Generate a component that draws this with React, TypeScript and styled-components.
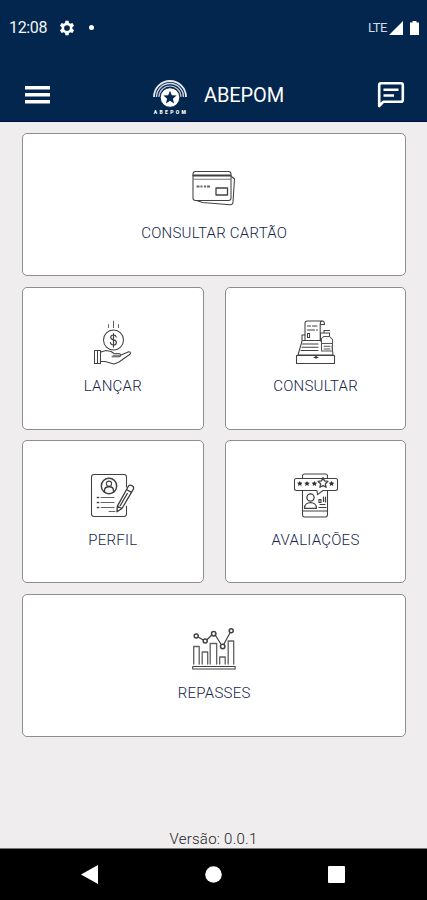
import React from 'react';
import styled, { createGlobalStyle } from 'styled-components';

const GlobalStyle = createGlobalStyle`
  * { box-sizing: border-box; }
  body { margin: 0; background: #efedee; font-family: Roboto, "Liberation Sans", sans-serif; }
  svg { display: block; flex: none; }
`;

const Screen = styled.div`
  width: 427px;
  height: 900px;
  display: flex;
  flex-direction: column;
  background: #efedee;
  overflow: hidden;
`;

const Header = styled.header`
  height: 122px;
  flex: none;
  background: #03264e;
  border-bottom: 1px solid #050741;
  color: #fff;
`;

const StatusBar = styled.div`
  height: 55px;
  padding: 0 7px 0 9px;
  display: flex;
  align-items: center;
  justify-content: space-between;
`;

const StatusGroup = styled.div<{ $gap: number }>`
  display: flex;
  align-items: center;
  gap: ${(p) => p.$gap}px;
`;

const Clock = styled.span`
  font-size: 16px;
  line-height: 20px;
  width: 38px;
  letter-spacing: -0.35px;
  white-space: nowrap;
  color: #f3f5f8;
`;

const Dot = styled.i`
  width: 5px;
  height: 5px;
  margin-left: 2px;
  border-radius: 50%;
  background: #fff;
`;

const Network = styled.span`
  font-size: 13px;
  line-height: 16px;
  letter-spacing: -0.5px;
  color: #d5dbe3;
`;

const AppBar = styled.div`
  height: 66px;
  padding: 14px 22px 0 25px;
  display: flex;
  align-items: center;
  justify-content: space-between;
`;

const Brand = styled.div`
  display: flex;
  align-items: center;
  gap: 16px;
  margin-left: 10px;
`;

const Logo = styled.div`
  width: 36px;
  display: flex;
  flex-direction: column;
  align-items: center;
  padding-top: 4px;
`;

const LogoName = styled.span`
  font-size: 5px;
  line-height: 7px;
  font-weight: 900;
  letter-spacing: 2.3px;
  margin-right: -2px;
  margin-top: 1px;
`;

const Title = styled.h1`
  margin: 0;
  font-size: 20px;
  line-height: 26px;
  font-weight: 400;
  width: 81px;
  letter-spacing: -0.1px;
  white-space: nowrap;
`;

const IconButton = styled.button`
  border: 0;
  padding: 0;
  background: none;
  color: #fff;
`;

const Menu = styled.main`
  flex: 1;
  padding: 11.3px 20.6px 0 22px;
  display: grid;
  grid-template-columns: 1fr 1fr;
  grid-auto-rows: 142.8px;
  gap: 10.7px 21px;
`;

const Card = styled.button<{ $wide?: boolean }>`
  grid-column: ${(p) => (p.$wide ? 'span 2' : 'span 1')};
  display: flex;
  flex-direction: column;
  align-items: center;
  padding: 24px 0 0;
  border: 1px solid #8c8e91;
  border-radius: 5px;
  background: #fff;
  font-family: inherit;
`;

const Label = styled.span`
  margin-top: 4.6px;
  font-size: 15px;
  line-height: 20px;
  font-weight: 300;
  letter-spacing: 0.25px;
  color: #14244a;
`;

const Version = styled.footer`
  height: 19px;
  flex: none;
  font-size: 15px;
  line-height: 20px;
  font-weight: 300;
  letter-spacing: 0.25px;
  text-align: center;
  color: #222;
`;

const NavBar = styled.nav`
  height: 52px;
  flex: none;
  padding: 0 82px 0 81px;
  display: flex;
  align-items: center;
  justify-content: space-between;
  background: #000;
  border-top: 1px solid #77787a;
`;

const Drawing = ({ view, children }: { view: string; children: React.ReactNode }) => (
  <svg width="60" height="60" viewBox={view} fill="none" stroke="#414141" strokeWidth="1.05" strokeLinejoin="round" strokeLinecap="round">
    {children}
  </svg>
);

const CardsIcon = () => (
  <Drawing view="3.500 -2 60 60">
    <rect x="12.5" y="11.5" width="38" height="29" rx="2.5" />
    <path d="M13 15.5h37" strokeWidth="2" /><path d="M13 19.3h37" stroke="#777" />
    <path d="M51 16.5l3 2.5-1.5 23c-.1 2-1.2 3-3 2.800L22 42.500l-6-2" />
    <path d="M16 26.500h3m1 0h2m1.500 0h2m1 0h3" strokeWidth="2" stroke="#666" strokeLinecap="butt" />
    <rect x="35.500" y="28" width="11.500" height="7" strokeWidth="1.300" />
  </Drawing>
);

const HandIcon = () => (
  <Drawing view="-2 0 60 60">
    <path d="M23.500 12.500v3M28.500 9v6.500M33.500 12.500v3" stroke="#666" />
    <circle cx="28.500" cy="28" r="10" />
    <path d="M31.200 25c-.3-1.500-1.200-2-2.700-2-1.700 0-2.800.8-2.800 2.300 0 3.500 5.700 1.800 5.700 5.200 0 1.700-1.200 2.500-2.900 2.500-1.800 0-2.900-.7-3.100-2.500M28.500 21.500V35" strokeWidth="1.200" />
    <path d="M9.500 38.500h6v13h-6zM12.500 39v12M16 40l5-1.500 5 1 3 2h5c2 0 2 3.300 0 3.300h-7M35 43.500l8-3.500c2-.7 3.300 1 2 2.300L34 50l-5 2-9-2.500H16" />
    <path d="M29 42h5M28 43.500h7" stroke="#888" />
  </Drawing>
);

const RegisterIcon = () => (
  <Drawing view="1 0 60 60">
    <path d="M20 28V11.500C20 9.500 21 9 22.500 9H37c2 0 2.500 1.500 2.500 3.500h-4.300V28M35.200 12.500c0-2 .5-3.500 2-3.500M22.500 14h3m2 0h4.500M22.500 18h7m2 0h1" />
    <path d="M22.500 21.500h2v4h-2zM17 29v-6h3M35.500 29v-8h9v3M39 21v-2.500h5.500M18 28.500h18M17 29l-4 14h35l-1-9M17.500 32H33M17 35.200h16M16 38.500h17" />
    <path d="M36.500 39V26.500l2-2h6l3 3V39zM37 31.500h10M39 34.200h6M39 37h6" stroke="#555" />
    <path d="M11.500 43.500h38v8h-38zM29 45.500h4" />
    <circle cx="31" cy="45.300" r=".8" fill="#414141" />
  </Drawing>
);

const ProfileIcon = () => (
  <Drawing view="1 0 60 60">
    <path d="M44.500 22V12c0-1.800-.8-2.500-2.500-2.500H12C10.200 9.500 9.500 10.200 9.500 12v37c0 1.800.7 2.500 2.500 2.500h30c1.700 0 2.500-.7 2.500-2.500v-8" />
    <circle cx="27" cy="21" r="7.700" strokeWidth="1.500" />
    <circle cx="27" cy="18.700" r="2.600" />
    <path d="M22.500 27v-1.500c0-5 9-5 9 0V27" strokeWidth="1.400" />
    <path d="M15.500 32.500h1M15.500 37.500h1M15.500 42.500h1" strokeWidth="1.700" />
    <path d="M19 32.500h13M19 37.500h13M19 42.500h13M27 46.500h6" stroke="#666" />
    <path d="M46.500 21c1.500-2 6 .2 5 2.800L40 43.500l-5 3.300.3-5.500zM44.500 24.500l4.800 2.800M35.300 41l4.500 2.500M45.300 28.500l-7 12" strokeWidth="1.350" />
  </Drawing>
);

const star = 'M38 12.700l1.500 3.200 3.500.4-2.600 2.500.7 3.500-3.100-1.700-3.100 1.700.7-3.500-2.600-2.500 3.500-.4z';

const ReviewIcon = () => (
  <Drawing view="1 0 60 60">
    <path d="M17.500 13V11c0-1.400.7-2 2-2h21c1.500 0 2 .6 2 2v2" />
    <path d="M32 25.500H11.500c-1.200 0-2-.7-2-2v-8c0-1.300.8-2 2-2h39c1.300 0 2 .7 2 2v8c0 1.300-.7 2-2 2H38l-5.500 4.200z" />
    <path d="M17.500 26v23.500c0 1.500.7 2.500 2 2.500h21c1.500 0 2-1 2-2.500V26M18 46h24.500" />
    <circle cx="25.500" cy="32.500" r="3.600" strokeWidth="1.300" />
    <path d="M19.500 43.300c0-7.500 12-7.500 12 0zM34 34.500h2v3h-2zM34 42.500h7M35 39.500h5M38.500 36.500V32M40.500 37v-5" strokeWidth="1.200" />
    <path d={star} fill="#fff" strokeWidth="1.300" />
    <g fill="#333" stroke="none">
      {[14.8, 22, 29.4, 46.5].map((x) => (
        <path key={x} transform={`translate(${x} 18.500)`} d="M0-2.600L.9-.9 2.700-.7 1.400.7 1.700 2.500 0 1.600-1.700 2.500-1.400.7-2.700-.7-.9-.9z" />
      ))}
    </g>
  </Drawing>
);

const ChartIcon = () => (
  <Drawing view="0.300 -1 60 60">
    <path d="M10 44V26.500h5.500V44M18.500 44V32H24v12M26.500 44V23.500H33V44M36 44v-7h5.500v7M44.500 44V21H50v23" stroke="#606060" strokeWidth="1.300" />
    <path d="M9 46.500h42.500v2.500H9z" />
    <path d="M14.500 17l5 3M23.500 19.500l4.500-4.500M31.500 15l6 9.500M40 24.500l6.500-12" strokeWidth="1.200" />
    <g strokeWidth="1.500">
      <circle cx="12.500" cy="16" r="2" />
      <circle cx="21.500" cy="21" r="2" />
      <circle cx="30" cy="13.700" r="2.200" />
      <circle cx="39" cy="26.500" r="2.200" />
      <circle cx="47.500" cy="10.700" r="2" />
    </g>
  </Drawing>
);

const GearIcon = () => (
  <svg width="18" height="18" viewBox="1.900 1 22 22" fill="#fff">
    <path d="M19.400 13a7.700 7.700 0 0 0 0-2l2.100-1.600-2-3.500-2.500 1a7.300 7.300 0 0 0-1.700-1L14.900 3h-4l-.4 2.900a7.300 7.300 0 0 0-1.700 1l-2.500-1-2 3.500L6.400 11a7.700 7.700 0 0 0 0 2l-2.100 1.600 2 3.500 2.500-1c.5.400 1.100.8 1.700 1l.4 2.900h4l.4-2.900c.6-.2 1.200-.6 1.700-1l2.500 1 2-3.500zM12.900 15.500a3.500 3.500 0 1 1 0-7 3.500 3.500 0 0 1 0 7z" />
  </svg>
);

const LogoMark = () => (
  <svg width="36" height="29" viewBox="0 0 36 29" fill="none" stroke="#fff">
    <path d="M2 18a16 16 0 0 1 32 0" strokeWidth="1.800" opacity=".9" />
    <path d="M4.500 18a13.500 13.500 0 0 1 27 0" strokeWidth="1.400" opacity=".8" />
    <path d="M7 18a11 11 0 0 1 22 0" strokeWidth="1.200" opacity=".75" />
    <circle cx="18" cy="18.500" r="9.800" fill="#fff" stroke="#03264e" strokeWidth="1" />
    <path d="M18 11.800l1.800 4.500 4.800.3-3.700 3.100 1.200 4.700-4.100-2.600-4.100 2.600 1.200-4.700-3.700-3.100 4.800-.3z" fill="#03264e" stroke="none" />
  </svg>
);

const entries = [
  { label: 'CONSULTAR CARTÃO', Icon: CardsIcon, wide: true },
  { label: 'LANÇAR', Icon: HandIcon },
  { label: 'CONSULTAR', Icon: RegisterIcon },
  { label: 'PERFIL', Icon: ProfileIcon },
  { label: 'AVALIAÇÕES', Icon: ReviewIcon },
  { label: 'REPASSES', Icon: ChartIcon, wide: true },
];

export default function App() {
  return (
    <Screen>
      <GlobalStyle />
      <Header>
        <StatusBar>
          <StatusGroup $gap={11}>
            <Clock>12:08</Clock>
            <GearIcon />
            <Dot />
          </StatusGroup>
          <StatusGroup $gap={2}>
            <Network>LTE</Network>
            <svg width="31" height="16" viewBox="0 0 31 16" fill="#fff">
              <path d="M0 15L14 1v14zM21 2.500h2.500V1h4v1.500H30V15h-9z" />
            </svg>
          </StatusGroup>
        </StatusBar>
        <AppBar>
          <IconButton aria-label="Menu">
            <svg width="25" height="18" viewBox="0 0 25 18" fill="#fff">
              <path d="M0 0h25v3.500H0zM0 7h25v3.500H0zM0 14h25v3.500H0z" />
            </svg>
          </IconButton>
          <Brand>
            <Logo>
              <LogoMark />
              <LogoName>ABEPOM</LogoName>
            </Logo>
            <Title>ABEPOM</Title>
          </Brand>
          <IconButton aria-label="Mensagens">
            <svg width="28" height="28" viewBox="0 0 28 28" fill="none" stroke="#fff" strokeWidth="2.600" strokeLinejoin="round">
              <path d="M2.200 25V4c0-1.200.6-1.800 1.800-1.800h20c1.200 0 1.800.6 1.800 1.800v15c0 1.200-.6 1.800-1.800 1.800H6.200zM6.500 8.700h15M6.500 14.500H17" />
            </svg>
          </IconButton>
        </AppBar>
      </Header>
      <Menu>
        {entries.map(({ label, Icon, wide }) => (
          <Card key={label} $wide={wide}>
            <Icon />
            <Label>{label}</Label>
          </Card>
        ))}
      </Menu>
      <Version>Versão: 0.0.1</Version>
      <NavBar>
        <svg width="17" height="19" viewBox="0 0 17 19" fill="#fff"><path d="M0 9.500L17 0v19z" /></svg>
        <svg width="17" height="17" viewBox="0 0 17 17" fill="#fff"><circle cx="8.500" cy="8.500" r="8.300" /></svg>
        <svg width="17" height="17" viewBox="0 0 17 17" fill="#fff"><rect width="17" height="17" rx="1" /></svg>
      </NavBar>
    </Screen>
  );
}
